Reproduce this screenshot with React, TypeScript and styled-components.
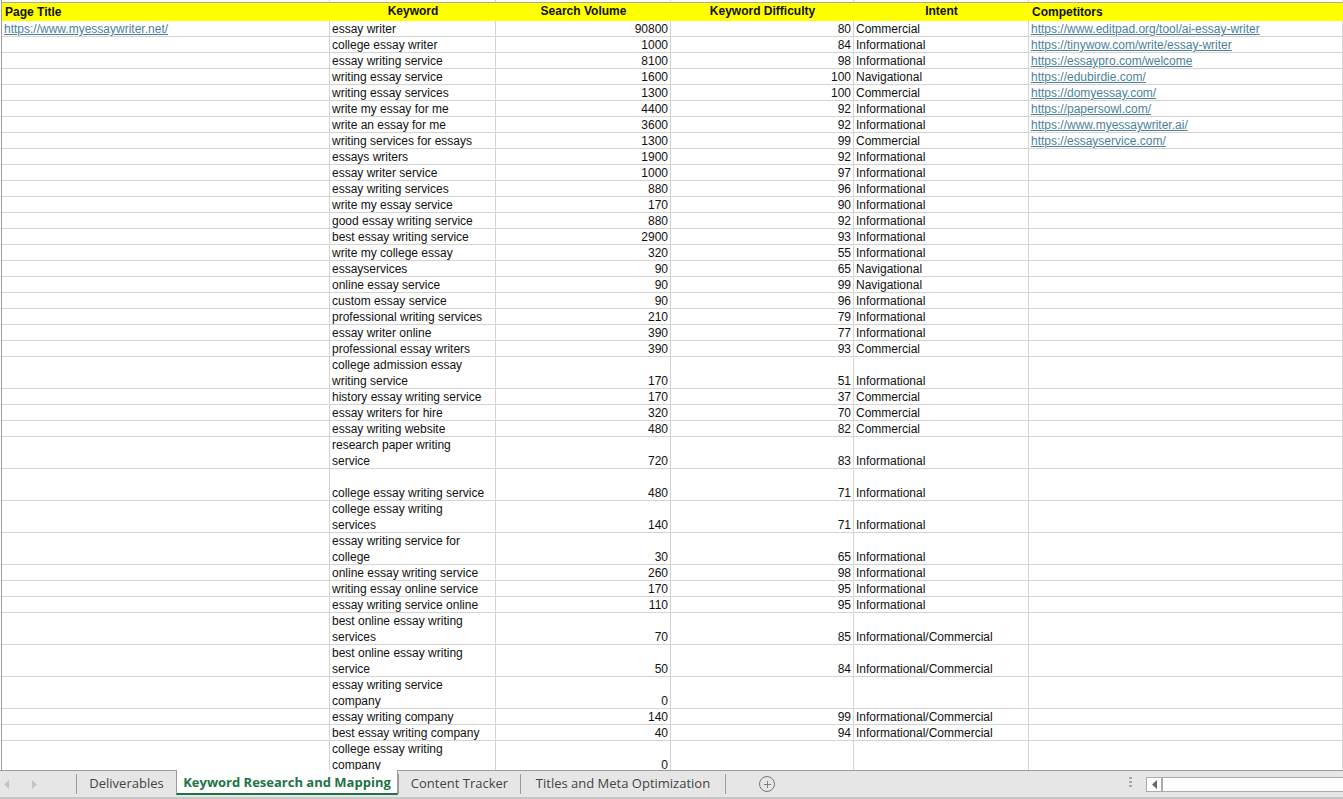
import React from "react";
import styled, {createGlobalStyle} from "styled-components";
import {Plus} from "lucide-react";

const GlobalStyle = createGlobalStyle`
  html, body {
    margin: 0;
    padding: 0;
    height: 100%;
    overflow: hidden;
    background: #fff;
  }
`;

const COLUMNS = "328px 166px 175px 183px 175px 1fr";

const Page = styled.div`
  width: 1343px;
  height: 799px;
  display: flex;
  flex-direction: column;
  font-family: "Liberation Sans", Arial, sans-serif;
  font-size: 12px;
  color: #111;
`;

const Sheet = styled.div`
  height: 770px;
  overflow: hidden;
  margin-left: 1px;
  border-left: 1px solid #9e9e9e;
`;

const Row = styled.div`
  display: grid;
  grid-template-columns: ${COLUMNS};
`;

const TopRow = styled(Row)`
  height: 3px;
`;

const TopCell = styled.div`
  border-right: 1px solid #d4d4d4;
  border-bottom: 1px solid #a8a8a8;
  box-sizing: border-box;
`;

const HeaderRow = styled(Row)`
  height: 18px;
  background: #ffff00;
`;

const HeaderCell = styled.div<{$center?: boolean}>`
  font-weight: 700;
  line-height: ${(p) => (p.$center ? "17px" : "19px")};
  padding: 0 3px;
  text-align: ${(p) => (p.$center ? "center" : "left")};
`;

const Cell = styled.div<{$lines: number; $right?: boolean}>`
  box-sizing: border-box;
  height: ${(p) => p.$lines * 16}px;
  border-right: 1px solid #d4d4d4;
  border-bottom: 1px solid #d4d4d4;
  padding: 0 2px;
  line-height: 16px;
  white-space: pre-line;
  overflow: hidden;
  display: flex;
  align-items: flex-end;
  justify-content: ${(p) => (p.$right ? "flex-end" : "flex-start")};
`;

const CellText = styled.span`
  display: block;
  position: relative;
  top: 1px;
`;

const SheetLink = styled.a`
  color: #4d7f9c;
  text-decoration: underline;
`;

const TabBar = styled.div`
  box-sizing: border-box;
  height: 29px;
  background: #e6e6e6;
  border-top: 1px solid #9c9c9c;
  border-bottom: 2px solid #c8c8c8;
  display: flex;
  align-items: stretch;
  font-family: "Open Sans", "Noto Sans", sans-serif;
  font-size: 13px;
  color: #444;
`;

const TabNav = styled.div`
  width: 76px;
  display: flex;
  align-items: center;
  gap: 21px;
  padding-left: 3px;
  box-sizing: border-box;
  color: #c4c4c4;
`;

const Arrow = styled.svg`
  width: 7px;
  height: 9px;
  fill: currentColor;
`;

const Tab = styled.div<{$active?: boolean; $width: number}>`
  box-sizing: border-box;
  width: ${(p) => p.$width}px;
  height: 24px;
  display: flex;
  align-items: center;
  justify-content: center;
  white-space: nowrap;
  ${(p) =>
    p.$active
      ? `
    background: #fff;
    color: #217346;
    font-weight: 700;
    border-left: 1px solid #9c9c9c;
    border-right: 1px solid #9c9c9c;
    border-bottom: 2px solid #217346;
    margin-top: -1px;
    height: 25px;
  `
      : ""}
`;

const TabDivider = styled.div`
  width: 1px;
  height: 20px;
  margin-top: 3px;
  background: #9c9c9c;
`;

const AddSheet = styled.div`
  width: 16px;
  height: 16px;
  margin: 5px 0 0 33px;
  border: 1.5px solid #777;
  border-radius: 50%;
  box-sizing: border-box;
  display: flex;
  align-items: center;
  justify-content: center;
  color: #777;
`;

const Dots = styled.div`
  margin: 6px 0 0 354px;
  width: 3px;
  height: 11px;
  background: repeating-linear-gradient(
    to bottom,
    #aaa 0 2px,
    transparent 2px 4px
  );
`;

const ScrollBar = styled.div`
  box-sizing: border-box;
  margin: 6px 0 0 14px;
  height: 15px;
  flex: 1;
  background: #fff;
  border: 1px solid #ababab;
  border-right: none;
  display: flex;
`;

const ScrollButton = styled.div`
  width: 14px;
  border-right: 2px solid #ababab;
  display: flex;
  align-items: center;
  justify-content: center;
  color: #666;
`;

type KeywordRow = [string, number | "", number | "", string];

const KEYWORDS: KeywordRow[] = [
  ["essay writer", 90800, 80, "Commercial"],
  ["college essay writer", 1000, 84, "Informational"],
  ["essay writing service", 8100, 98, "Informational"],
  ["writing essay service", 1600, 100, "Navigational"],
  ["writing essay services", 1300, 100, "Commercial"],
  ["write my essay for me", 4400, 92, "Informational"],
  ["write an essay for me", 3600, 92, "Informational"],
  ["writing services for essays", 1300, 99, "Commercial"],
  ["essays writers", 1900, 92, "Informational"],
  ["essay writer service", 1000, 97, "Informational"],
  ["essay writing services", 880, 96, "Informational"],
  ["write my essay service", 170, 90, "Informational"],
  ["good essay writing service", 880, 92, "Informational"],
  ["best essay writing service", 2900, 93, "Informational"],
  ["write my college essay", 320, 55, "Informational"],
  ["essayservices", 90, 65, "Navigational"],
  ["online essay service", 90, 99, "Navigational"],
  ["custom essay service", 90, 96, "Informational"],
  ["professional writing services", 210, 79, "Informational"],
  ["essay writer online", 390, 77, "Informational"],
  ["professional essay writers", 390, 93, "Commercial"],
  ["college admission essay\nwriting service", 170, 51, "Informational"],
  ["history essay writing service", 170, 37, "Commercial"],
  ["essay writers for hire", 320, 70, "Commercial"],
  ["essay writing website", 480, 82, "Commercial"],
  ["research paper writing\nservice", 720, 83, "Informational"],
  ["\ncollege essay writing service", 480, 71, "Informational"],
  ["college essay writing\nservices", 140, 71, "Informational"],
  ["essay writing service for\ncollege", 30, 65, "Informational"],
  ["online essay writing service", 260, 98, "Informational"],
  ["writing essay online service", 170, 95, "Informational"],
  ["essay writing service online", 110, 95, "Informational"],
  ["best online essay writing\nservices", 70, 85, "Informational/Commercial"],
  ["best online essay writing\nservice", 50, 84, "Informational/Commercial"],
  ["essay writing service\ncompany", 0, "", ""],
  ["essay writing company", 140, 99, "Informational/Commercial"],
  ["best essay writing company", 40, 94, "Informational/Commercial"],
  ["college essay writing\ncompany", 0, "", ""],
];

const COMPETITORS = [
  "https://www.editpad.org/tool/ai-essay-writer",
  "https://tinywow.com/write/essay-writer",
  "https://essaypro.com/welcome",
  "https://edubirdie.com/",
  "https://domyessay.com/",
  "https://papersowl.com/",
  "https://www.myessaywriter.ai/",
  "https://essayservice.com/",
];

const TABS = [
  {label: "Deliverables", width: 99},
  {label: "Keyword Research and Mapping", width: 222, active: true},
  {label: "Content Tracker", width: 121},
  {label: "Titles and Meta Optimization", width: 204},
];

const App: React.FC = () => {
  return (
    <Page>
      <GlobalStyle />
      <Sheet>
        <TopRow>
          {[0, 1, 2, 3, 4, 5].map((i) => (
            <TopCell key={i} />
          ))}
        </TopRow>
        <HeaderRow>
          <HeaderCell>Page Title</HeaderCell>
          <HeaderCell $center>Keyword</HeaderCell>
          <HeaderCell $center>Search Volume</HeaderCell>
          <HeaderCell $center>Keyword Difficulty</HeaderCell>
          <HeaderCell $center>Intent</HeaderCell>
          <HeaderCell>Competitors</HeaderCell>
        </HeaderRow>
        {KEYWORDS.map(([keyword, volume, difficulty, intent], index) => {
          const lines = keyword.includes("\n") ? 2 : 1;
          return (
            <Row key={keyword}>
              <Cell $lines={lines}>
                {index === 0 && (
                  <CellText>
                    <SheetLink>https://www.myessaywriter.net/</SheetLink>
                  </CellText>
                )}
              </Cell>
              <Cell $lines={lines}>
                <CellText>{keyword}</CellText>
              </Cell>
              <Cell $lines={lines} $right>
                <CellText>{volume}</CellText>
              </Cell>
              <Cell $lines={lines} $right>
                <CellText>{difficulty}</CellText>
              </Cell>
              <Cell $lines={lines}>
                <CellText>{intent}</CellText>
              </Cell>
              <Cell $lines={lines}>
                {COMPETITORS[index] && (
                  <CellText>
                    <SheetLink>{COMPETITORS[index]}</SheetLink>
                  </CellText>
                )}
              </Cell>
            </Row>
          );
        })}
      </Sheet>
      <TabBar>
        <TabNav>
          <Arrow viewBox="0 0 7 9">
            <path d="M6 0v9L1 4.5z" />
          </Arrow>
          <Arrow viewBox="0 0 7 9">
            <path d="M1 0v9l5-4.5z" />
          </Arrow>
        </TabNav>
        <TabDivider />
        {TABS.map((tab, index) => (
          <React.Fragment key={tab.label}>
            <Tab $active={tab.active} $width={tab.width}>
              {tab.label}
            </Tab>
            {index >= 1 && <TabDivider />}
          </React.Fragment>
        ))}
        <AddSheet>
          <Plus size={11} strokeWidth={2} />
        </AddSheet>
        <Dots />
        <ScrollBar>
          <ScrollButton>
            <Arrow viewBox="0 0 7 9">
              <path d="M6 0v9L1 4.5z" />
            </Arrow>
          </ScrollButton>
        </ScrollBar>
      </TabBar>
    </Page>
  );
};

export default App;
